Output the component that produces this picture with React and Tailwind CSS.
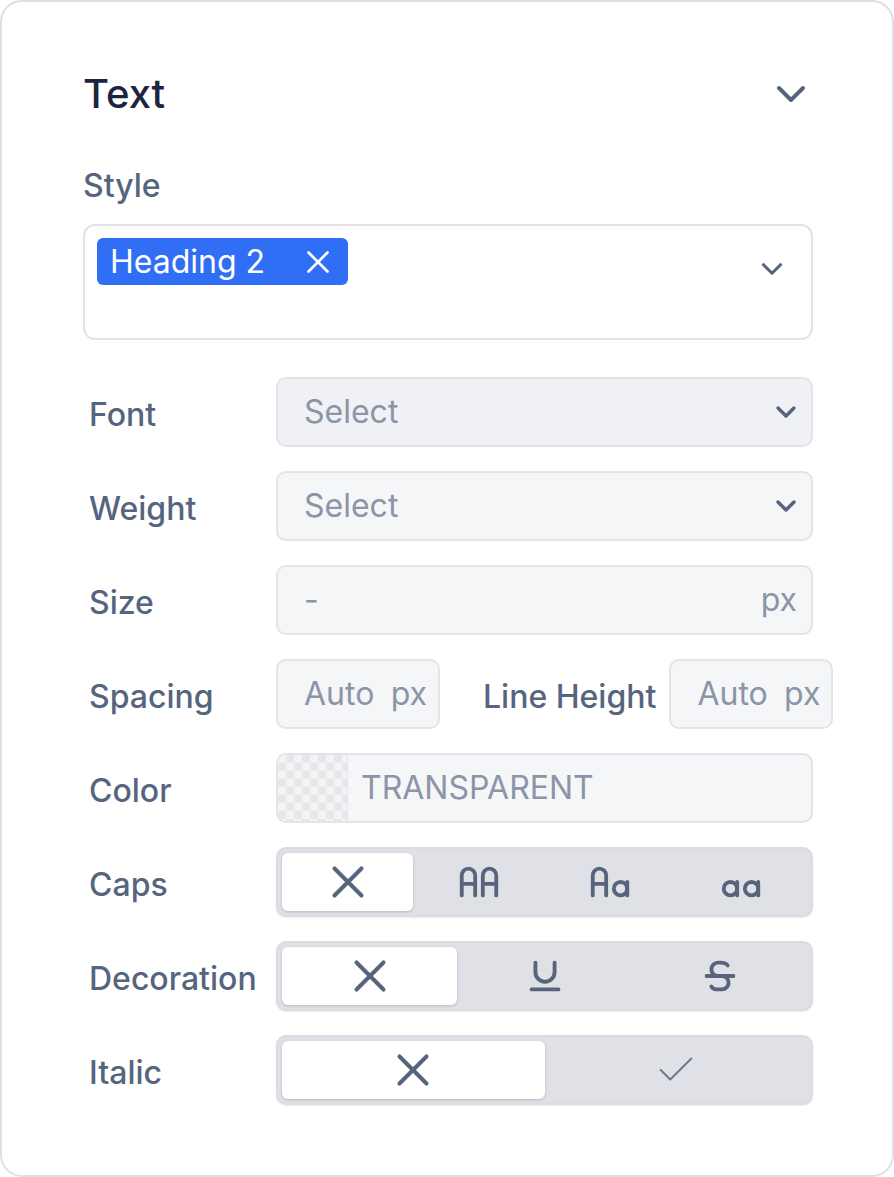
import React from "react";
import { ChevronDown, X, Check } from "lucide-react";
import { TbLetterCaseUpper, TbLetterCase, TbLetterCaseLower, TbUnderline, TbStrikethrough } from "react-icons/tb";

const font = { fontFamily: "Inter, 'Noto Sans', sans-serif" };

function Label({ children, className = "" }) {
  return (
    <div className={"w-[193px] shrink-0 pl-[6px] pt-[6px] text-[32px] leading-[40px] font-medium text-[#56657e] " + className}>
      {children}
    </div>
  );
}

function Row({ label, children }) {
  return (
    <div className="flex h-[70px] items-center">
      <Label>{label}</Label>
      {children}
    </div>
  );
}

function SelectBox({ bg }) {
  return (
    <div className={"flex h-[70px] flex-1 items-center justify-between rounded-[10px] border-2 border-[#e1e4e9] pl-[26px] pr-[9px] " + bg}>
      <span className="text-[32px] leading-[40px] text-[#8b95a7]">Select</span>
      <ChevronDown size={32} strokeWidth={2.6} className="text-[#56647c]" />
    </div>
  );
}

function Segmented({ items, cols }) {
  return (
    <div className={"grid h-[70px] flex-1 rounded-[10px] border-2 border-[#d9dce2] bg-[#dfe1e6] p-[4px] shadow-[0_1px_2px_rgba(0,0,0,0.08)] " + cols}>
      {items.map((it, i) => (
        <div
          key={i}
          className={
            "flex items-center justify-center rounded-[6px] text-[#56647c] " +
            (i === 0 ? "bg-white shadow-[0_1px_3px_rgba(0,0,0,0.18)]" : "")
          }
        >
          {it}
        </div>
      ))}
    </div>
  );
}

export default function App() {
  return (
    <div style={font} className="h-[1177px] w-[894px] bg-white">
      <div className="h-[1177px] w-[894px] rounded-[22px] border-2 border-[#dcdfe4] bg-white pl-[81px] pr-[79px] pt-[68px]">
        <div className="flex h-[48px] items-center justify-between">
          <div className="text-[40px] font-medium leading-[48px] text-[#1b2540]">Text</div>
          <ChevronDown size={48} strokeWidth={2} className="-mr-[2px] text-[#56647c]" />
        </div>

        <div className="mt-[48px] text-[32px] font-medium leading-[40px] text-[#56657e]">Style</div>

        <div className="mt-[18px] flex h-[116px] items-start justify-between rounded-[12px] border-2 border-[#e1e3e8] p-[12px]">
          <div className="flex h-[47px] items-center gap-[34px] rounded-[6px] bg-[#2f6ef5] pl-[13px] pr-[11px]">
            <span className="text-[32px] leading-[40px] text-white">Heading 2</span>
            <X size={38} strokeWidth={1.7} className="text-white" />
          </div>
          <ChevronDown size={34} strokeWidth={2.2} className="mr-[10px] mt-[14px] text-[#56647c]" />
        </div>

        <div className="mt-[37px] flex flex-col gap-[24px]">
          <Row label="Font">
            <SelectBox bg="bg-[#f0f1f4]" />
          </Row>
          <Row label="Weight">
            <SelectBox bg="bg-[#f5f6f8]" />
          </Row>
          <Row label="Size">
            <div className="flex h-[70px] flex-1 items-center justify-between rounded-[10px] border-2 border-[#e1e4e9] bg-[#f5f6f8] pl-[26px] pr-[14px]">
              <span className="text-[32px] leading-[40px] text-[#8b95a7]">-</span>
              <span className="text-[32px] leading-[40px] text-[#8b95a7]">px</span>
            </div>
          </Row>
          <Row label="Spacing">
            <div className="flex h-[70px] w-[164px] shrink-0 items-center justify-between rounded-[10px] border-2 border-[#e1e4e9] bg-[#f5f6f8] pl-[26px] pr-[11px]">
              <span className="text-[32px] leading-[40px] text-[#8b95a7]">Auto</span>
              <span className="text-[32px] leading-[40px] text-[#8b95a7]">px</span>
            </div>
            <div className="ml-[43px] shrink-0 whitespace-nowrap pt-[6px] text-[32px] font-medium leading-[40px] text-[#56657e]">Line Height</div>
            <div className="ml-[13px] flex h-[70px] w-[164px] shrink-0 items-center justify-between rounded-[10px] border-2 border-[#e1e4e9] bg-[#f5f6f8] pl-[26px] pr-[11px]">
              <span className="text-[32px] leading-[40px] text-[#8b95a7]">Auto</span>
              <span className="text-[32px] leading-[40px] text-[#8b95a7]">px</span>
            </div>
          </Row>
          <Row label="Color">
            <div className="flex h-[70px] flex-1 items-center overflow-hidden rounded-[10px] border-2 border-[#e1e4e9] bg-[#f5f6f8]">
              <div className="h-full w-[70px] shrink-0 border-r border-[#e3e5ea] bg-[repeating-conic-gradient(#e6e7ea_0%_25%,#f4f4f5_0%_50%)] bg-[length:16px_16px]" />
              <span className="pl-[13px] text-[32px] leading-[40px] text-[#8b95a7]">TRANSPARENT</span>
            </div>
          </Row>
          <Row label="Caps">
            <Segmented
              cols="grid-cols-4"
              items={[
                <X key="x" size={54} strokeWidth={1.8} />,
                <TbLetterCaseUpper key="u" size={46} />,
                <TbLetterCase key="c" size={46} />,
                <TbLetterCaseLower key="l" size={46} />,
              ]}
            />
          </Row>
          <Row label="Decoration">
            <Segmented
              cols="grid-cols-3"
              items={[
                <X key="x" size={54} strokeWidth={1.8} />,
                <TbUnderline key="u" size={46} />,
                <TbStrikethrough key="s" size={46} />,
              ]}
            />
          </Row>
          <Row label="Italic">
            <Segmented
              cols="grid-cols-2"
              items={[
                <X key="x" size={54} strokeWidth={1.8} />,
                <Check key="c" size={46} strokeWidth={1.1} className="text-[#6f7b91]" />,
              ]}
            />
          </Row>
        </div>
      </div>
    </div>
  );
}
